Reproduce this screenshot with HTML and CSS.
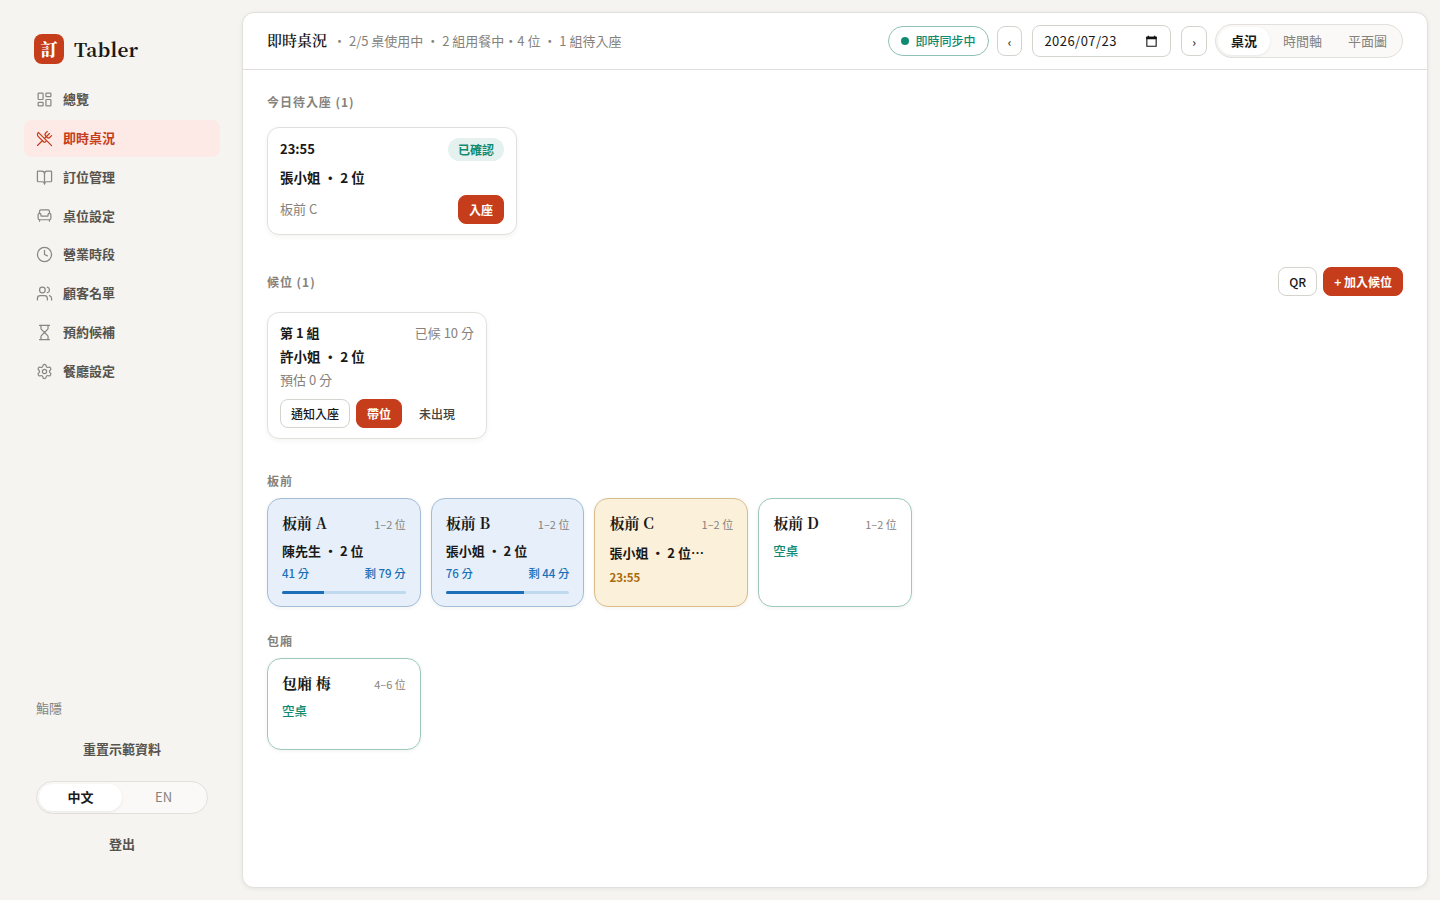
FILE: index.html
```html
<!DOCTYPE html>
<html lang="zh-Hant">
<head>
    <meta charset="UTF-8">
    <meta name="viewport" content="width=device-width, initial-scale=1.0">
    <title>即時桌況 - Tabler</title>
    <link rel="stylesheet" href="styles.css">
</head>
<body>
    <aside class="sidebar">
        <div class="brand">
            <span class="brand-mark">訂</span>
            <span class="brand-name">Tabler</span>
        </div>
        <nav class="nav">
            <a class="nav-item">
                <svg viewBox="0 0 24 24"><rect x="3" y="3" width="7" height="9" rx="1"/><rect x="14" y="3" width="7" height="5" rx="1"/><rect x="14" y="12" width="7" height="9" rx="1"/><rect x="3" y="16" width="7" height="5" rx="1"/></svg>
                總覽
            </a>
            <a class="nav-item active">
                <svg viewBox="0 0 24 24"><path d="m16 2-2.3 2.3a3 3 0 0 0 0 4.2l1.8 1.8a3 3 0 0 0 4.2 0L22 8"/><path d="M15 15 3.3 3.3a4.2 4.2 0 0 0 0 6l7.3 7.3c.7.7 2 .7 2.8 0L15 15Zm0 0 7 7"/><path d="m2.1 21.8 6.4-6.3"/><path d="m19 5-7 7"/></svg>
                即時桌況
            </a>
            <a class="nav-item">
                <svg viewBox="0 0 24 24"><path d="M12 7v14"/><path d="M3 18a1 1 0 0 1-1-1V4a1 1 0 0 1 1-1h5a4 4 0 0 1 4 4 4 4 0 0 1 4-4h5a1 1 0 0 1 1 1v13a1 1 0 0 1-1 1h-6a3 3 0 0 0-3 3 3 3 0 0 0-3-3z"/></svg>
                訂位管理
            </a>
            <a class="nav-item">
                <svg viewBox="0 0 24 24"><path d="M19 9V6a2 2 0 0 0-2-2H7a2 2 0 0 0-2 2v3"/><path d="M3 16a2 2 0 0 0 2 2h14a2 2 0 0 0 2-2v-5a2 2 0 0 0-4 0v1.5a.5.5 0 0 1-.5.5h-9a.5.5 0 0 1-.5-.5V11a2 2 0 0 0-4 0z"/><path d="M5 18v2"/><path d="M19 18v2"/></svg>
                桌位設定
            </a>
            <a class="nav-item">
                <svg viewBox="0 0 24 24"><circle cx="12" cy="12" r="10"/><path d="M12 6v6l4 2"/></svg>
                營業時段
            </a>
            <a class="nav-item">
                <svg viewBox="0 0 24 24"><path d="M16 21v-2a4 4 0 0 0-4-4H6a4 4 0 0 0-4 4v2"/><circle cx="9" cy="7" r="4"/><path d="M22 21v-2a4 4 0 0 0-3-3.87"/><path d="M16 3.13a4 4 0 0 1 0 7.75"/></svg>
                顧客名單
            </a>
            <a class="nav-item">
                <svg viewBox="0 0 24 24"><path d="M5 22h14"/><path d="M5 2h14"/><path d="M17 22v-4.172a2 2 0 0 0-.586-1.414L12 12l-4.414 4.414A2 2 0 0 0 7 17.828V22"/><path d="M7 2v4.172a2 2 0 0 0 .586 1.414L12 12l4.414-4.414A2 2 0 0 0 17 6.172V2"/></svg>
                預約候補
            </a>
            <a class="nav-item">
                <svg viewBox="0 0 24 24"><path d="M9.671 4.136a2.34 2.34 0 0 1 4.659 0 2.34 2.34 0 0 0 3.319 1.915 2.34 2.34 0 0 1 2.33 4.033 2.34 2.34 0 0 0 0 3.831 2.34 2.34 0 0 1-2.33 4.033 2.34 2.34 0 0 0-3.319 1.915 2.34 2.34 0 0 1-4.659 0 2.34 2.34 0 0 0-3.32-1.915 2.34 2.34 0 0 1-2.33-4.033 2.34 2.34 0 0 0 0-3.831A2.34 2.34 0 0 1 6.35 6.051a2.34 2.34 0 0 0 3.319-1.915"/><circle cx="12" cy="12" r="3"/></svg>
                餐廳設定
            </a>
        </nav>
        <div class="sidebar-foot">
            <div class="venue">鮨隱</div>
            <button class="text-btn">重置示範資料</button>
            <div class="seg lang">
                <button class="on">中文</button>
                <button>EN</button>
            </div>
            <button class="text-btn">登出</button>
        </div>
    </aside>

    <main class="panel">
        <header class="topbar">
            <h1>即時桌況</h1>
            <span class="summary">・ 2/5 桌使用中 ・ 2 組用餐中・4 位 ・ 1 組待入座</span>
            <div class="tools">
                <span class="sync"><i class="dot"></i>即時同步中</span>
                <div class="date-nav">
                    <button class="btn step">‹</button>
                    <div class="date">
                        <span>2026/07/23</span>
                        <svg viewBox="0 0 12 12"><path d="M1.7 2.2h8.6v8.2H1.7z"/><path class="fill" d="M1.2 1.7h9.6v2.2H1.2zM2.5.6h1.3v2H2.5zM8.2.6h1.3v2H8.2z"/></svg>
                    </div>
                    <button class="btn step">›</button>
                </div>
                <div class="seg views">
                    <button class="on">桌況</button>
                    <button>時間軸</button>
                    <button>平面圖</button>
                </div>
            </div>
        </header>

        <div class="content">
            <section class="arrivals">
                <h2>今日待入座 (1)</h2>
                <div class="card arrival">
                    <div class="row">
                        <strong>23:55</strong>
                        <span class="badge">已確認</span>
                    </div>
                    <strong class="guest">張小姐 ・ 2 位</strong>
                    <div class="row">
                        <span class="muted">板前 C</span>
                        <button class="btn primary">入座</button>
                    </div>
                </div>
            </section>

            <section class="waitlist">
                <div class="row">
                    <h2>候位 (1)</h2>
                    <div class="actions">
                        <button class="btn">QR</button>
                        <button class="btn primary">+ 加入候位</button>
                    </div>
                </div>
                <div class="card waiting">
                    <div class="row">
                        <strong>第 1 組</strong>
                        <span class="muted">已候 10 分</span>
                    </div>
                    <strong class="guest">許小姐 ・ 2 位</strong>
                    <span class="muted">預估 0 分</span>
                    <div class="actions">
                        <button class="btn">通知入座</button>
                        <button class="btn primary">帶位</button>
                        <button class="btn ghost">未出現</button>
                    </div>
                </div>
            </section>

            <section class="area">
                <h2>板前</h2>
                <div class="tables">
                    <div class="table seated">
                        <div class="row"><h3>板前 A</h3><span class="cap">1–2 位</span></div>
                        <div class="guest">陳先生 ・ 2 位</div>
                        <div class="row time"><span>41 分</span><span>剩 79 分</span></div>
                        <div class="bar"><i style="width: 34%"></i></div>
                    </div>
                    <div class="table seated">
                        <div class="row"><h3>板前 B</h3><span class="cap">1–2 位</span></div>
                        <div class="guest">張小姐 ・ 2 位</div>
                        <div class="row time"><span>76 分</span><span>剩 44 分</span></div>
                        <div class="bar"><i style="width: 63%"></i></div>
                    </div>
                    <div class="table reserved">
                        <div class="row"><h3>板前 C</h3><span class="cap">1–2 位</span></div>
                        <div class="guest">張小姐 ・ 2 位⋯</div>
                        <div class="due">23:55</div>
                    </div>
                    <div class="table free">
                        <div class="row"><h3>板前 D</h3><span class="cap">1–2 位</span></div>
                        <div class="state">空桌</div>
                    </div>
                </div>
            </section>

            <section class="area">
                <h2>包廂</h2>
                <div class="tables">
                    <div class="table free">
                        <div class="row"><h3>包廂 梅</h3><span class="cap">4–6 位</span></div>
                        <div class="state">空桌</div>
                    </div>
                </div>
            </section>
        </div>
    </main>
</body>
</html>
```
FILE: styles.css
```css
:root {
    --bg: #f5f4f0;
    --ink: #1a1917;
    --ink-2: #57534d;
    --muted: #85827c;
    --line: #e2e0dc;
    --red: #c63d1b;
    --green: #0f8b72;
    --blue: #1a6fb8;
    --amber: #a86a0a;
    --sans: "Noto Sans CJK TC", sans-serif;
    --serif: "Noto Serif CJK TC", "Noto Serif TC", "Noto Serif CJK SC", "Noto Serif CJK JP", serif;
}
* {
    box-sizing: border-box;
}
body {
    margin: 0;
    height: 100vh;
    display: flex;
    background: var(--bg);
    color: var(--ink);
    font: 13px/1.45 var(--sans);
    overflow: hidden;
}
h1, h2, h3 {
    margin: 0;
}
button {
    font: inherit;
    color: inherit;
    border: 0;
    background: none;
    padding: 0;
    white-space: nowrap;
}
strong {
    font-weight: 600;
}

/* sidebar */
.sidebar {
    width: 242px;
    padding: 34px 22px 46.5px 24px;
    display: flex;
    flex-direction: column;
}
.brand {
    display: flex;
    align-items: center;
    gap: 10px;
    padding-left: 10px;
    margin-bottom: 17.5px;
    font-family: var(--serif);
    font-weight: 900;
}
.brand-mark {
    width: 30px;
    height: 30px;
    border-radius: 8px;
    background: var(--red);
    color: #fff;
    font-size: 17px;
    line-height: 29px;
    text-align: center;
}
.brand-name {
    font-size: 19px;
    font-weight: 700;
    line-height: 30px;
    letter-spacing: 0.2px;
}
.nav {
    display: flex;
    flex-direction: column;
    gap: 2px;
}
.nav-item {
    display: flex;
    align-items: center;
    gap: 10px;
    padding: 8.5px 12px 9.5px;
    border-radius: 8px;
    color: var(--ink-2);
    font-weight: 600;
}
.nav-item svg {
    width: 17px;
    height: 17px;
    fill: none;
    stroke: #8a8781;
    stroke-width: 1.75;
    stroke-linecap: round;
    stroke-linejoin: round;
}
.nav-item.active {
    background: #fdeae6;
    color: var(--red);
}
.nav-item.active svg {
    stroke: var(--red);
}
.sidebar-foot {
    margin-top: auto;
    padding: 0 12px;
    display: flex;
    flex-direction: column;
}
.venue {
    color: var(--muted);
    margin-bottom: 22px;
}
.text-btn {
    color: var(--ink-2);
    font-weight: 600;
}
.seg {
    display: flex;
    padding: 2px;
    border: 1px solid var(--line);
    border-radius: 99px;
    background: #faf9f7;
    color: var(--muted);
}
.seg button {
    flex: 1;
    height: 28px;
    border-radius: 99px;
}
.seg .on {
    background: #fff;
    color: var(--ink);
    font-weight: 600;
    box-shadow: 0 1px 3px rgba(40, 30, 20, 0.08);
}
.lang {
    margin: 21.5px 0 21px;
}
.lang button {
    height: 27px;
}

/* main panel */
.panel {
    flex: 1;
    margin: 12px 12px 12px 0;
    border: 1px solid var(--line);
    border-radius: 12px;
    background: #fff;
    box-shadow: 0 1px 4px rgba(40, 30, 20, 0.07);
}
.topbar {
    height: 57px;
    padding: 0 24px;
    display: flex;
    align-items: center;
    border-bottom: 1px solid var(--line);
}
.topbar h1 {
    font: 600 15px/22px var(--serif);
    padding-bottom: 2px;
}
.summary {
    margin-left: 6px;
    color: var(--muted);
}
.tools {
    margin-left: auto;
    display: flex;
    align-items: center;
    gap: 8px;
}
.sync {
    display: flex;
    align-items: center;
    gap: 6.5px;
    height: 30px;
    padding: 0 12.5px 0 12px;
    border: 1px solid #8fc0b5;
    border-radius: 99px;
    color: var(--green);
    font-size: 12px;
    font-weight: 500;
}
.dot {
    width: 8px;
    height: 8px;
    border-radius: 50%;
    background: var(--green);
}
.date-nav {
    display: flex;
    align-items: center;
    gap: 10px;
}
.btn {
    height: 29px;
    padding: 0 10px;
    border: 1px solid #d5d3ce;
    border-radius: 8px;
    background: #fff;
    font-size: 12px;
    font-weight: 500;
    line-height: 27px;
}
.btn.step {
    width: 25.5px;
    height: 30px;
    padding: 0;
}
.btn.primary {
    background: var(--red);
    border-color: var(--red);
    color: #fff;
    font-weight: 700;
}
.btn.ghost {
    border-color: transparent;
    background: none;
    color: #45423d;
}
.date {
    width: 139px;
    height: 32px;
    padding: 0 12px 0 11px;
    display: flex;
    align-items: center;
    justify-content: space-between;
    border: 1px solid #d5d3ce;
    border-radius: 8px;
    letter-spacing: 0.45px;
}
.date svg {
    width: 13px;
    height: 13px;
    fill: none;
    stroke: #111;
}
.date .fill {
    fill: #111;
    stroke: none;
}
.views button {
    padding: 0 13px;
}
.views {
    padding: 2px;
}

.content {
    padding: 24px;
}
h2 {
    font-size: 12px;
    line-height: 17px;
    font-weight: 700;
    letter-spacing: 0.08em;
    color: var(--muted);
}
.row {
    display: flex;
    align-items: center;
    justify-content: space-between;
}
.actions {
    display: flex;
    gap: 6px;
}
.muted {
    color: var(--muted);
}
.card {
    display: flex;
    flex-direction: column;
    padding: 10px 12px;
    border: 1px solid var(--line);
    border-radius: 12px;
    background: #fff;
    box-shadow: 0 2px 5px rgba(40, 30, 20, 0.05);
}
.card .guest {
    font-size: 13.5px;
}
.arrivals h2 {
    margin-top: -1px;
}
.arrival {
    width: 250px;
    height: 108px;
    margin-top: 17px;
    justify-content: space-between;
}
.badge {
    height: 23px;
    padding: 0 10px;
    border-radius: 99px;
    background: #e4f1ee;
    color: var(--green);
    font-size: 12px;
    font-weight: 600;
    line-height: 24px;
}
.waitlist {
    margin-top: 32px;
}
.waiting {
    width: 220px;
    height: 127px;
    margin-top: 16px;
    padding-top: 11px;
    gap: 4.3px;
}
.waiting .actions {
    margin-top: auto;
}

/* tables */
.area {
    margin-top: 33px;
}
.area + .area {
    margin-top: 25.5px;
}
.tables {
    margin-top: 9px;
    display: grid;
    grid-template-columns: repeat(auto-fill, minmax(150px, 1fr));
    gap: 10px;
}
.table {
    min-height: 92px;
    padding: 13px 14px 12px;
    border: 1px solid #9cc8bd;
    border-radius: 14px;
    background: #fff;
    box-shadow: 0 1px 4px rgba(40, 30, 20, 0.06);
}
.table h3 {
    font: 700 15px/22px var(--serif);
}
.cap {
    color: var(--muted);
    font-size: 11px;
    line-height: 16px;
    padding-top: 2px;
}
.table .guest {
    margin-top: 7px;
    font-size: 13px;
    line-height: 19px;
    font-weight: 600;
}
.table.seated {
    background: #e6effa;
    border-color: #a3bdd6;
}
.table.reserved {
    background: #fbf0da;
    border-color: #d8bd8a;
}
.table.reserved .guest {
    margin-top: 9px;
}
.time {
    margin-top: 5px;
    color: var(--blue);
    font-size: 11.5px;
    line-height: 17px;
    font-weight: 500;
}
.bar {
    height: 2.5px;
    margin-top: 9px;
    border-radius: 2px;
    background: #bfdaee;
    overflow: hidden;
}
.bar i {
    display: block;
    height: 100%;
    background: var(--blue);
}
.due {
    margin-top: 7px;
    color: var(--amber);
    font-size: 11.5px;
    line-height: 17px;
    font-weight: 600;
}
.state {
    margin-top: 7px;
    color: var(--green);
    font-size: 12.5px;
    line-height: 19px;
    font-weight: 500;
}
.table.seated, .table.reserved {
    min-height: 108px;
}
```
